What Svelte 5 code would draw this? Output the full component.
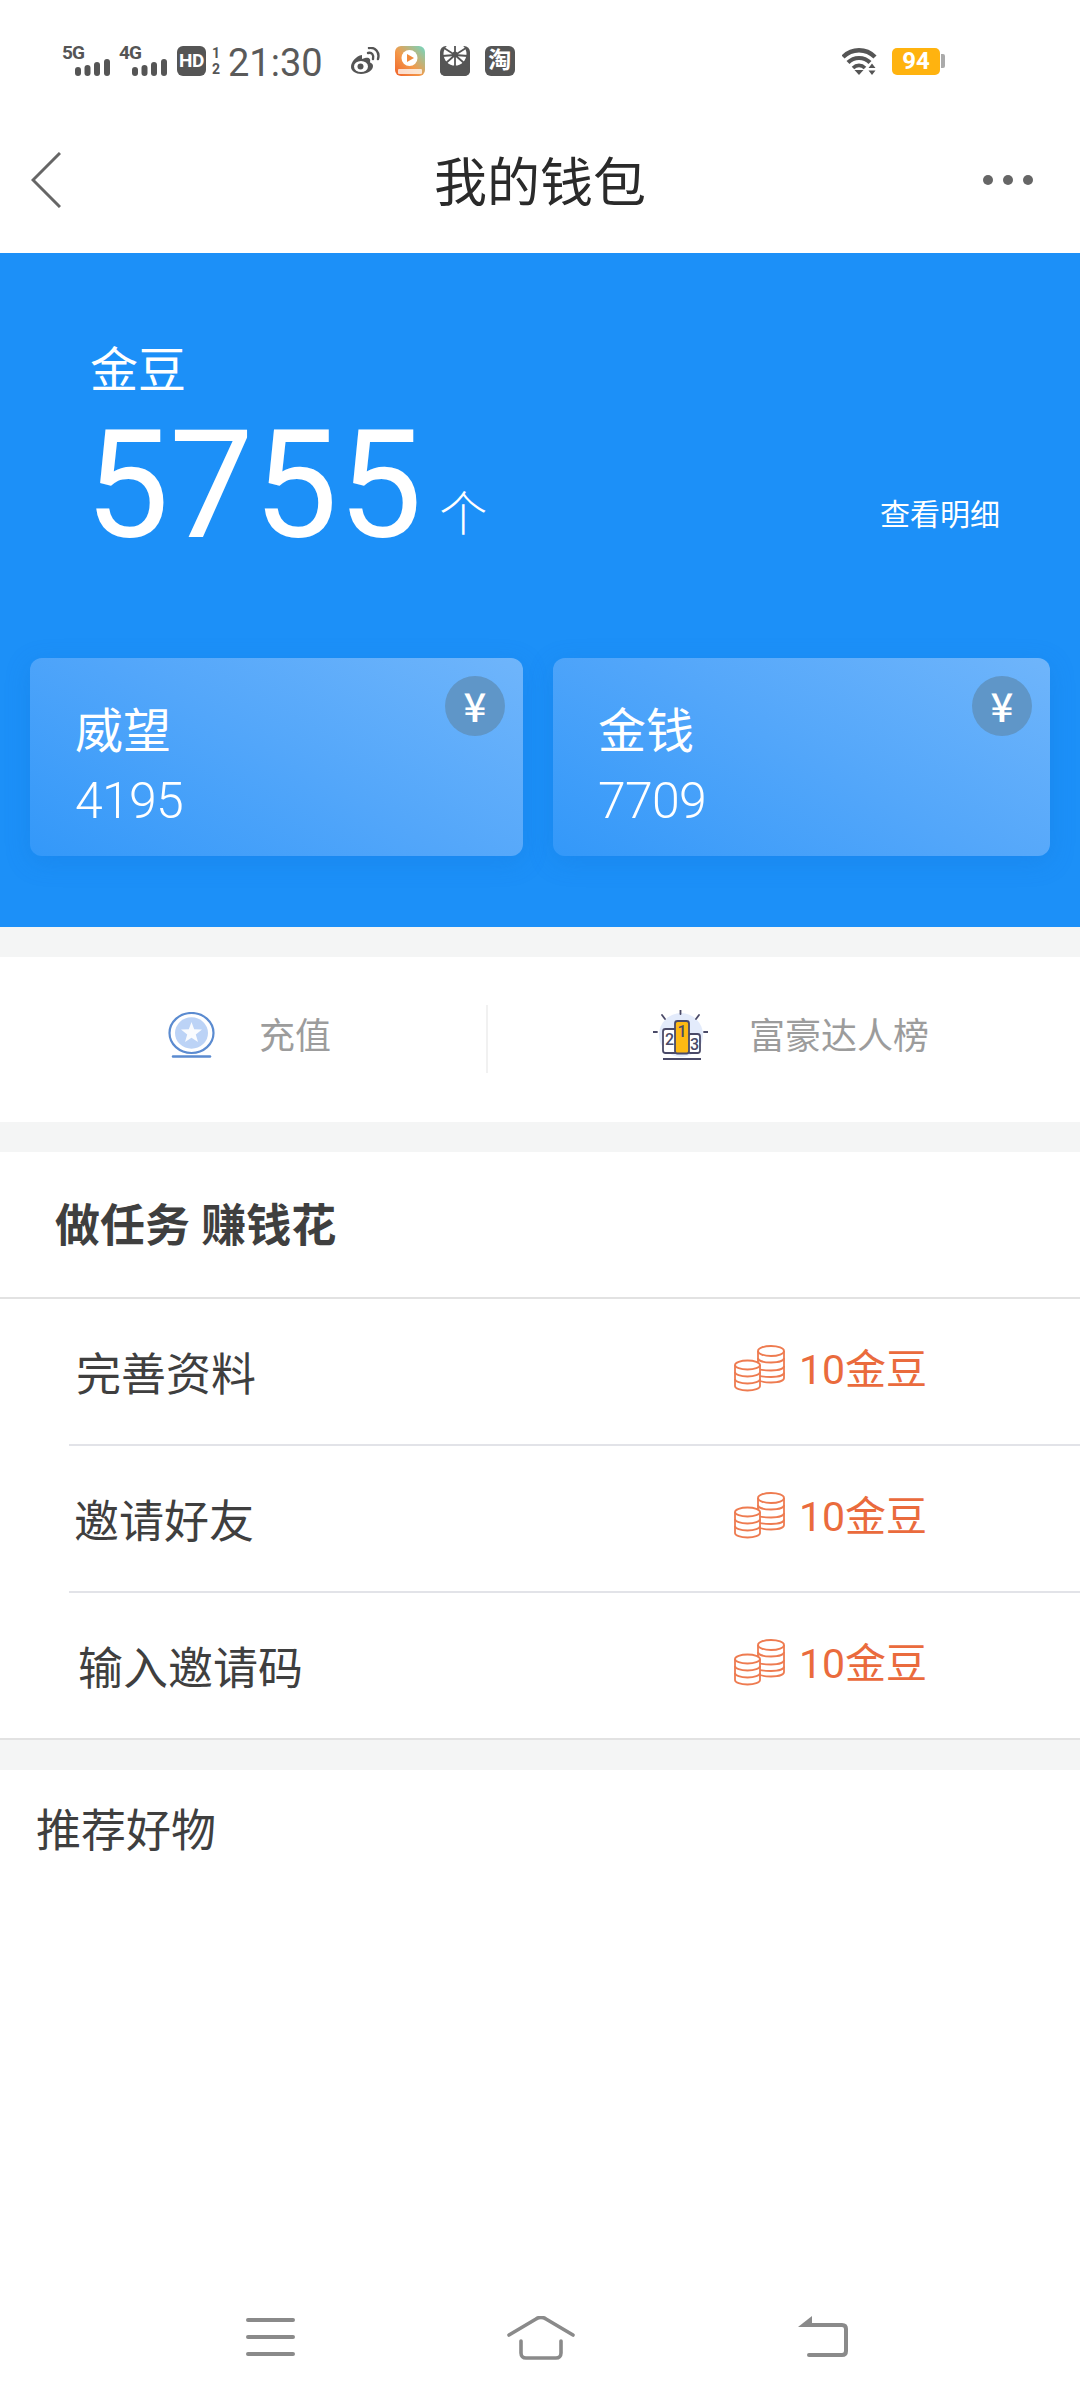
<script>
	const cards = [
		{ name: '威望', value: '4195' },
		{ name: '金钱', value: '7709' }
	];

	// labels don't share one left edge in the original, so each carries its own indent
	const tasks = [
		{ name: '完善资料', indent: 7 },
		{ name: '邀请好友', indent: 5 },
		{ name: '输入邀请码', indent: 9 }
	];
</script>

<div class="page">
	<div class="status">
		<div class="net">
			<span class="net-label">5G</span>
			<svg width="35" height="17" viewBox="0 0 35 17" fill="#555">
				<rect x="0" y="8" width="6" height="9" rx="3" />
				<rect x="9.5" y="6" width="6" height="11" rx="3" />
				<rect x="19" y="3" width="6" height="14" rx="3" />
				<rect x="29" y="0" width="6" height="17" rx="3" />
			</svg>
		</div>
		<div class="net net-second">
			<span class="net-label">4G</span>
			<svg width="35" height="17" viewBox="0 0 35 17" fill="#555">
				<rect x="0" y="8" width="6" height="9" rx="3" />
				<rect x="9.5" y="6" width="6" height="11" rx="3" />
				<rect x="19" y="3" width="6" height="14" rx="3" />
				<rect x="29" y="0" width="6" height="17" rx="3" />
			</svg>
		</div>
		<span class="hd">HD</span>
		<span class="sim"><span>1</span><span>2</span></span>
		<span class="time">21:30</span>
		<svg class="weibo" width="30" height="28" viewBox="0 0 30 28" fill="none" stroke="#555">
			<path d="M12 8C6 9 1 15 1 20c0 4 5 7 10 7 7 0 12-4 12-8 0-3-3-3-3-4 1-3-1-5-5-4l-3 1z" fill="#555" stroke="none" />
			<ellipse cx="11" cy="19.5" rx="7" ry="5.5" fill="#fff" stroke="none" />
			<circle cx="10.5" cy="19.5" r="3" fill="#555" stroke="none" />
			<path d="M18 6c4-1 6 2 5 6" stroke-width="2.4" stroke-linecap="round" />
			<path d="M19 1c6-1 11 4 9 11" stroke-width="2.4" stroke-linecap="round" />
		</svg>
		<svg class="app" width="30" height="30" viewBox="0 0 30 30">
			<defs>
				<linearGradient id="appGrad" x1="1" y1="0" x2="0" y2="1">
					<stop offset="0" stop-color="#6fd8c4" />
					<stop offset="0.55" stop-color="#f39a4a" />
					<stop offset="1" stop-color="#f0622a" />
				</linearGradient>
			</defs>
			<rect width="30" height="30" rx="6" fill="url(#appGrad)" />
			<circle cx="14.5" cy="12" r="8" fill="#fff" />
			<path d="M12 8l7 4-7 4z" fill="#f08a3c" />
			<rect x="3" y="23" width="24" height="5" rx="1" fill="#fff" opacity="0.75" />
		</svg>
		<svg class="app" width="30" height="30" viewBox="0 0 30 30">
			<rect width="30" height="30" rx="6" fill="#555" />
			<circle cx="15" cy="8" r="11.5" fill="#fff" />
			<g stroke="#555" stroke-width="1.8">
				<path d="M15 9L15 20M15 9L6 17M15 9L24 17M15 9L2 10M15 9L28 10M15 9L4 2M15 9L26 2M15 9L15 -4" />
			</g>
			<circle cx="15" cy="8" r="2.4" fill="#555" />
			<rect y="20" width="30" height="10" rx="5" fill="#555" />
		</svg>
		<span class="tao">淘</span>

		<div class="status-right">
			<svg width="35" height="27" viewBox="0 0 35 27" fill="none" stroke="#555">
				<path d="M1 9c9-9 23-9 32 0" stroke-width="4.4" />
				<path d="M6 14.5c6-6 16-6 22 0" stroke-width="4.2" />
				<path d="M11 20c3.500-3.500 8.500-3.500 12 0" stroke-width="3.600" />
				<path d="M12.500 22h9L17 27z" fill="#555" stroke="none" />
				<path d="M30 15.500l3.500 4.500h-7zM30 27l3.500-4.500h-7z" fill="#555" stroke="none" />
			</svg>
			<div class="battery">94</div>
			<span class="battery-nub"></span>
		</div>
	</div>

	<header class="head">
		<svg class="back" width="30" height="56" viewBox="0 0 30 56" fill="none" stroke="#666" stroke-width="3">
			<path d="M29 1L2 28l27 27" />
		</svg>
		<h1>我的钱包</h1>
		<div class="more"><i></i><i></i><i></i></div>
	</header>

	<section class="hero">
		<div class="hero-label">金豆</div>
		<div class="amount">
			<span class="amount-num">5755</span>
			<span class="amount-unit">个</span>
			<span class="detail">查看明细</span>
		</div>

		<div class="cards">
			{#each cards as card}
				<div class="card">
					<div class="card-name">{card.name}</div>
					<div class="card-value">{card.value}</div>
					<span class="yen">¥</span>
				</div>
			{/each}
		</div>
	</section>

	<div class="shortcuts">
		<div class="shortcut first">
			<svg width="47" height="46" viewBox="0 0 47 46" fill="none">
				<ellipse cx="23.500" cy="21" rx="22" ry="20" stroke="#5b8bd0" stroke-width="2.200" />
				<ellipse cx="23.500" cy="21" rx="16.500" ry="15.700" fill="#bcd3f6" />
				<path d="M23.500 10l2.700 7.300 7.800.3-6.200 4.900 2.200 7.500-6.500-4.300-6.500 4.300 2.200-7.500-6.200-4.900 7.800-.3z" fill="#fff" opacity="0.9" />
				<path d="M5 44.500h37" stroke="#5b8bd0" stroke-width="2.500" stroke-linecap="round" />
			</svg>
			<span>充值</span>
		</div>
		<div class="shortcut second">
			<svg width="55" height="50" viewBox="0 0 55 50">
				<circle cx="28" cy="25" r="22" fill="#e3ebfb" />
				<g stroke="#4a4a68" stroke-width="1.800" stroke-linecap="round">
					<path d="M27.500 0v4M9 5l3 4M46 5l-3 4M0 22h4M51 22h4" />
				</g>
				<rect x="10" y="19" width="14" height="24" rx="2.500" fill="#fff" stroke="#4a4a68" stroke-width="1.800" />
				<rect x="35" y="24" width="12" height="19" rx="2.500" fill="#fff" stroke="#4a4a68" stroke-width="1.800" />
				<rect x="22" y="11" width="14" height="32.500" rx="2.500" fill="#fdb913" stroke="#4a4a68" stroke-width="1.800" />
				<text x="16.500" y="35" class="rank">2</text>
				<text x="29" y="27" class="rank">1</text>
				<text x="41.500" y="40" class="rank">3</text>
				<path d="M10 49h38" stroke="#4a4a68" stroke-width="2" />
			</svg>
			<span>富豪达人榜</span>
		</div>
	</div>

	<section class="tasks">
		<h2>做任务 赚钱花</h2>
		<ul>
			{#each tasks as task}
				<li>
					<span class="task-name" style="padding-left: {task.indent}px">{task.name}</span>
					<span class="reward">
						<svg width="51" height="47" viewBox="0 0 51 47" fill="none" stroke="#ee7b50" stroke-width="1.800">
							<ellipse cx="13.500" cy="20" rx="12.500" ry="4.500" />
							<path d="M1 20v21c0 2.500 5.500 4.500 12.500 4.500S26 43.500 26 41V20" />
							<path d="M1 27c0 2.500 5.500 4.500 12.500 4.500S26 29.500 26 27M1 34c0 2.500 5.500 4.500 12.500 4.500S26 36.500 26 34" />
							<ellipse cx="37" cy="6" rx="13" ry="5" />
							<path d="M24 6v11M50 6v27c0 2.500-5 4.500-13 4.500-4 0-8-.5-11-1.500" />
							<path d="M24 13c0 2.500 5 4.500 13 4.500S50 15.500 50 13M26 24.500c3 .8 7 1 11 1 8 0 13-2 13-4.500M26 31c3 .8 7 1 11 1 8 0 13-2 13-4.500" />
						</svg>
						<span class="reward-text">10金豆</span>
					</span>
				</li>
			{/each}
		</ul>
	</section>

	<section class="recommend">推荐好物</section>

	<nav class="bottom">
		<svg class="nav-menu" width="49" height="38" viewBox="0 0 49 38" stroke="#8a8a8a" stroke-width="4" stroke-linecap="round">
			<path d="M2 2h45M2 19h45M2 36h45" />
		</svg>
		<svg class="nav-home" width="68" height="44" viewBox="0 0 68 44" fill="none" stroke="#8a8a8a" stroke-width="3.600" stroke-linecap="round">
			<path d="M2 19L29 3c3-2 7-2 10 0l27 16" />
			<path d="M14 25v12c0 3 2 5 5 5h30c3 0 5-2 5-5V25" />
		</svg>
		<svg class="nav-back" width="50" height="41" viewBox="0 0 50 41" fill="none" stroke="#8a8a8a" stroke-width="4" stroke-linecap="round">
			<path d="M12 9h32c2.500 0 4 1.500 4 4v22c0 2.500-1.500 4-4 4H11" />
			<path d="M14 0v11H0z" fill="#8a8a8a" stroke="none" />
		</svg>
	</nav>
</div>

<style>
	:global(body) {
		margin: 0;
		background: #fff;
	}

	.page {
		display: flex;
		flex-direction: column;
		width: 1080px;
		height: 2400px;
		overflow: hidden;
		font-family: Roboto, "Noto Sans CJK SC", sans-serif;
		color: #3f3f3f;
		background: #fff;
	}

	/* status bar */
	.status {
		display: flex;
		align-items: center;
		height: 30px;
		padding: 46px 0 0 62px;
		color: #555;
	}

	.net {
		display: flex;
		flex-direction: column;
		align-items: flex-end;
		width: 48px;
		height: 30px;
	}

	.net-second {
		margin-left: 9px;
	}

	.net-label {
		align-self: flex-start;
		height: 13px;
		font-size: 19px;
		font-weight: 700;
		letter-spacing: -1px;
		line-height: 13px;
	}

	.hd {
		display: block;
		width: 29px;
		height: 30px;
		margin-left: 10px;
		border-radius: 6px;
		background: #555;
		color: #fff;
		font-size: 19px;
		font-weight: 700;
		letter-spacing: -0.5px;
		line-height: 30px;
		text-align: center;
	}

	.sim {
		display: flex;
		flex-direction: column;
		width: 10px;
		margin-left: 5px;
		font-size: 14px;
		font-weight: 700;
		line-height: 16px;
		text-align: center;
	}

	.time {
		margin-left: 7px;
		padding-top: 3px;
		font-size: 38px;
		line-height: 30px;
		color: #5a5a5a;
	}

	.weibo {
		margin-left: 27px;
	}

	.app {
		display: block;
		margin-left: 15px;
	}

	.tao {
		display: block;
		width: 30px;
		height: 30px;
		margin-left: 15px;
		border-radius: 6px;
		background: #555;
		color: #fff;
		font-size: 23px;
		font-weight: 700;
		line-height: 30px;
		text-align: center;
	}

	.status-right {
		display: flex;
		align-items: center;
		margin-left: auto;
		padding-right: 135px;
	}

	.battery {
		width: 48px;
		height: 27px;
		margin-left: 15px;
		border-radius: 5px;
		background: #ffb30f;
		color: #fff;
		font-size: 24px;
		font-weight: 700;
		line-height: 27px;
		text-align: center;
	}

	.battery-nub {
		width: 4px;
		height: 14px;
		margin-left: 1px;
		border-radius: 0 2px 2px 0;
		background: #aaa;
	}

	/* title bar */
	.head {
		display: flex;
		position: relative;
		align-items: center;
		justify-content: center;
		height: 177px;
	}

	.back {
		position: absolute;
		top: 76px;
		left: 31px;
	}

	.head h1 {
		margin: 39px 0 0;
		font-size: 53px;
		font-weight: 400;
		line-height: 60px;
		color: #2a2a2a;
	}

	.more {
		display: flex;
		position: absolute;
		top: 99px;
		right: 47px;
		gap: 10px;
	}

	.more i {
		width: 10px;
		height: 10px;
		border-radius: 50%;
		background: #666;
	}

	/* blue panel */
	.hero {
		display: flex;
		flex-direction: column;
		height: 674px;
		box-sizing: border-box;
		padding-top: 88px;
		background: #1c90f8;
		color: #fff;
	}

	.hero-label {
		padding-left: 90px;
		font-size: 48px;
		line-height: 60px;
	}

	.amount {
		display: flex;
		align-items: flex-end;
		height: 150px;
		margin-top: 10px;
		padding: 0 80px 0 85px;
	}

	.amount-num {
		font-size: 150px;
		line-height: 150px;
	}

	.amount-unit {
		margin: 0 0 16px 17px;
		font-size: 48px;
		font-weight: 300;
		line-height: 60px;
	}

	.detail {
		margin: 0 0 26px auto;
		font-size: 30px;
		line-height: 40px;
	}

	.cards {
		display: grid;
		grid-template-columns: 493px 497px;
		gap: 30px;
		margin-top: auto;
		padding: 0 30px 71px;
	}

	.card {
		position: relative;
		height: 198px;
		box-sizing: border-box;
		padding: 44px 0 0 45px;
		border-radius: 12px;
		background: linear-gradient(30deg, #3398f9 0%, #52a6fa 50%, #6fb5fb 100%);
		box-shadow: 0 6px 24px rgba(20, 110, 210, 0.25);
	}

	.card-name {
		font-size: 48px;
		line-height: 60px;
	}

	.card-value {
		margin-top: 9px;
		font-size: 50px;
		font-weight: 300;
		letter-spacing: -0.7px;
		line-height: 60px;
	}

	.yen {
		position: absolute;
		top: 18px;
		right: 18px;
		width: 60px;
		height: 60px;
		border-radius: 50%;
		background: #5f96c8;
		font-family: "Noto Sans CJK SC", sans-serif;
		font-size: 40px;
		font-weight: 500;
		line-height: 58px;
		text-align: center;
	}

	/* shortcuts */
	.shortcuts {
		display: flex;
		height: 165px;
		margin-top: 30px;
		margin-bottom: 30px;
		box-shadow: 0 -30px 0 #f4f5f5, 0 30px 0 #f4f5f5;
	}

	.shortcut {
		display: flex;
		align-items: center;
		box-sizing: border-box;
		padding-bottom: 10px;
		font-size: 36px;
		color: #9c9c9c;
	}

	.shortcut span {
		margin-bottom: 3px;
	}

	.first {
		position: relative;
		width: 488px;
		padding-left: 168px;
		gap: 44px;
	}

	.first::after {
		content: "";
		position: absolute;
		top: 48px;
		right: 0;
		width: 2px;
		height: 68px;
		background: #f1f1f1;
	}

	.second {
		padding-left: 165px;
		gap: 41px;
	}

	.rank {
		fill: #4a4a68;
		font-size: 16px;
		font-weight: 500;
		text-anchor: middle;
	}

	/* task list */
	.tasks h2 {
		margin: 0;
		height: 140px;
		padding: 5px 0 0 55px;
		border-bottom: 2px solid #e2e2e2;
		font-size: 45px;
		font-weight: 700;
		line-height: 140px;
	}

	.tasks ul {
		margin: 0;
		padding: 0;
		list-style: none;
		border-bottom: 2px solid #e2e2e2;
	}

	.tasks li {
		display: flex;
		align-items: center;
		height: 145px;
		margin-left: 69px;
		padding-right: 153px;
		font-size: 45px;
	}

	.tasks li + li {
		border-top: 2px solid #e2e3e8;
	}

	.reward {
		display: flex;
		align-items: center;
		gap: 14px;
		margin-left: auto;
		padding-bottom: 10px;
		font-size: 41px;
		color: #ea6b3d;
	}

	.reward svg {
		margin-top: 4px;
	}

	.reward-text {
		margin-bottom: 2px;
	}

	.recommend {
		margin-top: 30px;
		padding: 32px 0 0 36px;
		font-size: 45px;
		line-height: 60px;
		box-shadow: 0 -30px 0 #f4f5f5;
	}

	/* system nav */
	.bottom {
		display: flex;
		align-items: flex-start;
		margin-top: auto;
		padding: 0 0 40px 246px;
	}

	.nav-menu {
		margin-top: 2px;
	}

	.nav-home {
		margin-left: 212px;
	}

	.nav-back {
		margin-left: 223px;
	}
</style>
